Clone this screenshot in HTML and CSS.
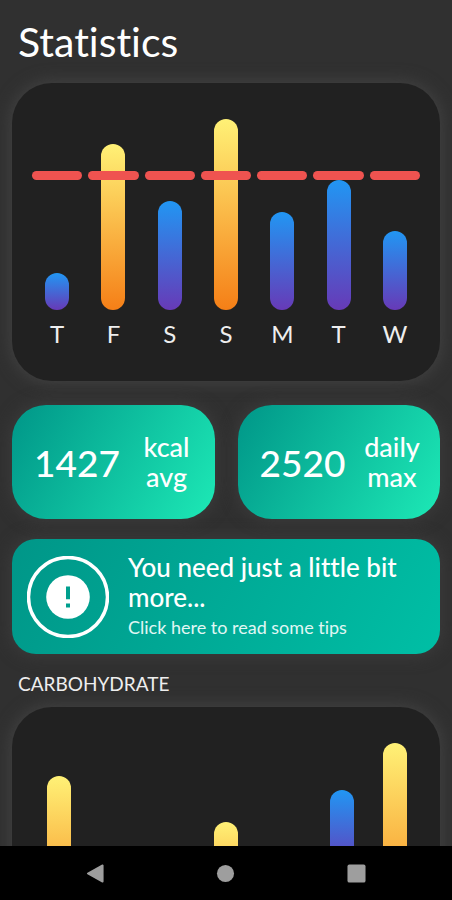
FILE: index.html
```html
<!DOCTYPE html>
<html lang="en">
<head>
<meta charset="utf-8">
<meta name="viewport" content="width=device-width, initial-scale=1">
<title>Statistics</title>
<link rel="stylesheet" href="styles.css">
</head>
<body>
<main class="screen">
  <h1 class="title">Statistics</h1>

  <section class="card" aria-label="Calories by day">
    <div class="plot week">
      <div class="bar low" style="height:37px"></div>
      <div class="bar high" style="height:166px"></div>
      <div class="bar low" style="height:109px"></div>
      <div class="bar high" style="height:191px"></div>
      <div class="bar low" style="height:98px"></div>
      <div class="bar low" style="height:130px"></div>
      <div class="bar low" style="height:79px"></div>
      <div class="limit week"><i></i><i></i><i></i><i></i><i></i><i></i><i></i></div>
    </div>
    <div class="days week">
      <span>T</span><span>F</span><span>S</span><span>S</span><span>M</span><span>T</span><span>W</span>
    </div>
  </section>

  <div class="stats">
    <div class="stat"><strong>1427</strong><span>kcal<br>avg</span></div>
    <div class="stat"><strong>2520</strong><span>daily<br>max</span></div>
  </div>

  <a class="tip" href="#tips">
    <svg class="tip-icon" viewBox="0 0 82 82" aria-hidden="true">
      <circle cx="41" cy="41" r="39.5" fill="none" stroke="#fff" stroke-width="3.5"/>
      <circle cx="41" cy="41" r="21.8" fill="#fff"/>
      <path d="M39 30.5h4v12.8h-4zM39 47.5h4v4h-4z" fill="#009f8e"/>
    </svg>
    <span class="tip-text">
      <span class="tip-title">You need just a little bit more...</span>
      <span class="tip-sub">Click here to read some tips</span>
    </span>
  </a>

  <h2 class="subtitle">CARBOHYDRATE</h2>
  <section class="card" aria-label="Carbohydrate by day">
    <div class="plot carbs">
      <div class="bar high" style="height:158px"></div>
      <div class="bar high" style="height:112px"></div>
      <div class="bar low" style="height:144px"></div>
      <div class="bar high" style="height:191px"></div>
    </div>
  </section>
</main>

<nav class="system" aria-label="System">
  <button type="button" aria-label="Back"><svg viewBox="0 0 20 20"><path d="M17.5 1.5v17L2 10z" fill="#9e9e9e" stroke="#9e9e9e" stroke-width="2" stroke-linejoin="round"/></svg></button>
  <button type="button" aria-label="Home"><svg viewBox="0 0 20 20"><circle cx="10" cy="10" r="9" fill="#9e9e9e"/></svg></button>
  <button type="button" aria-label="Recent apps"><svg viewBox="0 0 20 20"><rect x=".5" y=".5" width="19" height="19" rx="2" fill="#9e9e9e"/></svg></button>
</nav>
</body>
</html>
```
FILE: styles.css
```css
* {
  box-sizing: border-box;
}

body {
  margin: 0;
  height: 100vh;
  display: flex;
  flex-direction: column;
  background: #303030;
  color: #fff;
  font-family: Lato, "Open Sans", sans-serif;
  font-variant-ligatures: none;
}

.screen {
  flex: 1;
  min-height: 0;
  overflow: hidden;
  padding: 16px 12px 0;
}

.title {
  margin: 0 0 15px 6px;
  font-size: 41px;
  line-height: 52px;
  font-weight: 400;
}

.card {
  padding: 36px 17px 32px;
  border-radius: 40px;
  background: #212121;
  box-shadow: 0 0 16px 2px #424242;
}

.plot {
  position: relative;
  height: 191px;
  align-items: end;
}

.week {
  display: grid;
  grid-template-columns: repeat(7, 1fr);
  justify-items: center;
}

.bar {
  width: 24px;
  border-radius: 12px;
}

.low {
  background: linear-gradient(#2196f3, #673ab7);
}

.high {
  background: linear-gradient(#fff176, #f57f17);
}

.limit {
  position: absolute;
  top: 52px;
  left: 0;
  right: 0;
}

.limit i {
  width: calc(100% - 6px);
  height: 9px;
  border-radius: 5px;
  background: #ef5350;
}

.days {
  margin-top: 9px;
  font-size: 24px;
  line-height: 30px;
  color: #eee;
}

.stats {
  display: grid;
  grid-template-columns: 1fr 1fr;
  gap: 23px;
  margin: 24px 0 20px;
}

.stat {
  display: flex;
  align-items: center;
  justify-content: space-between;
  height: 114px;
  padding: 0 20px 0 22px;
  border-radius: 34px;
  background: linear-gradient(120deg, #009688, #1de9b6);
  box-shadow: 0 0 16px 2px #3c3c3c;
}

.stat strong {
  font-size: 37px;
  font-weight: 500;
}

.stat span {
  min-width: 56px;
  text-align: center;
  font-size: 27px;
  line-height: 30px;
  font-weight: 500;
}

.tip {
  display: flex;
  align-items: center;
  gap: 19px;
  height: 115px;
  padding: 0 15px;
  border-radius: 24px;
  background: linear-gradient(120deg, #009688, #00bfa5);
  box-shadow: 0 0 16px 2px #3c3c3c;
  color: #fff;
  text-decoration: none;
}

.tip-icon {
  flex: none;
  width: 82px;
  height: 82px;
}

.tip-title,
.tip-sub {
  display: block;
}

.tip-title {
  font-size: 26px;
  line-height: 30px;
  font-weight: 500;
}

.tip-sub {
  font-size: 18px;
  line-height: 30px;
  color: #e0f7f4;
}

.subtitle {
  margin: 18px 0 11px 6px;
  font-size: 19px;
  line-height: 24px;
  font-weight: 400;
  color: #eee;
}

.carbs {
  display: grid;
  grid-template-columns: 18fr 24px 143fr 24px 92fr 24px 29fr 24px 16fr;
}

.carbs .low {
  background: linear-gradient(#2196f3, #673ab7 80px);
}

.carbs .bar:nth-child(1) {
  grid-column: 2;
}

.carbs .bar:nth-child(2) {
  grid-column: 4;
}

.carbs .bar:nth-child(3) {
  grid-column: 6;
}

.carbs .bar:nth-child(4) {
  grid-column: 8;
}

.system {
  z-index: 1;
  display: grid;
  grid-template-columns: repeat(3, 1fr);
  height: 54px;
  padding: 0 30px;
  background: #000;
}

.system button {
  display: flex;
  align-items: center;
  justify-content: center;
  border: 0;
  padding: 0;
  background: none;
}

.system svg {
  width: 19px;
  height: 19px;
}
```
